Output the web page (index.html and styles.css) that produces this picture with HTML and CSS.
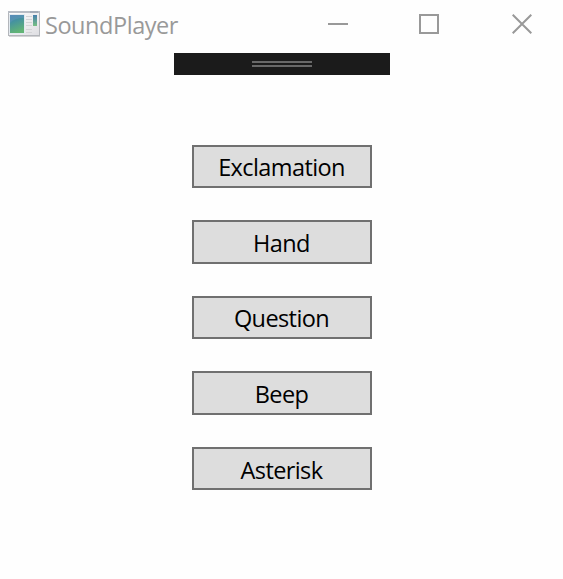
FILE: index.html
```html
<!DOCTYPE html>
<html lang="en">
<head>
<meta charset="utf-8">
<title>SoundPlayer</title>
<link rel="stylesheet" href="styles.css">
</head>
<body>
<div class="window">
  <header class="titlebar">
    <svg class="app-icon" width="32" height="26" viewBox="0 0 32 26">
      <defs>
        <linearGradient id="frame" x1="0" y1="0" x2="1" y2="1">
          <stop offset="0" stop-color="#fff"/>
          <stop offset="1" stop-color="#dedee2"/>
        </linearGradient>
        <linearGradient id="pane" x1="0" y1="0" x2=".3" y2="1">
          <stop offset="0" stop-color="#4c80b4"/>
          <stop offset=".4" stop-color="#4592a0"/>
          <stop offset="1" stop-color="#62b475"/>
        </linearGradient>
        <linearGradient id="side" x1="0" y1="0" x2="0" y2="1">
          <stop offset="0" stop-color="#477fae"/>
          <stop offset="1" stop-color="#76bf83"/>
        </linearGradient>
      </defs>
      <rect x=".5" y=".5" width="31" height="24" fill="url(#frame)" stroke="#b3b6bb"/>
      <path d="M0 1h32" stroke="#b8bdc5" stroke-width="2"/>
      <path d="M22 1h8" stroke="#929cac"/>
      <path d="M1 25.500h31" stroke="#d2d2d4"/>
      <rect x="1.500" y="3.500" width="15" height="19" fill="url(#pane)" stroke="#e2e9ef"/>
      <path d="M2 12Q6 7 16 7V4H2z" fill="#6c9bc5" opacity=".35"/>
      <path d="M18 5.500h6M18 8.500h6M18 11.500h6M18 14.500h6M18 18.500h6M18 21.500h6" stroke="#d3d4d6"/>
      <rect x="25" y="4" width="4" height="11" fill="url(#side)"/>
    </svg>
    <h1 class="title">SoundPlayer</h1>
    <div class="controls">
      <svg width="20" height="20" viewBox="0 0 20 20"><path d="M0 10h20"/></svg>
      <svg width="20" height="20" viewBox="0 0 20 20"><path d="M1 1h18v18H1z"/></svg>
      <svg width="20" height="20" viewBox="0 0 20 20"><path d="M.7.7l18.600 18.600M19.300.7L.7 19.300"/></svg>
    </div>
  </header>
  <div class="toolbar"><span class="grip"></span></div>
  <main class="buttons">
    <button>Exclamation</button>
    <button class="tall">Hand</button>
    <button>Question</button>
    <button class="tall">Beep</button>
    <button class="low">Asterisk</button>
  </main>
</div>
</body>
</html>
```
FILE: styles.css
```css
body {
  margin: 0;
  background: #fefefe;
  font-family: "Open Sans", "Noto Sans", sans-serif;
}
.window {
  display: flex;
  flex-direction: column;
  align-items: center;
  height: 579px;
  overflow: hidden;
}
.titlebar {
  display: flex;
  align-items: flex-start;
  box-sizing: border-box;
  width: 100%;
  height: 53px;
  padding: 11px 31px 0 8px;
}
.title {
  margin: -2px 0 0 5px;
  font-size: 23.5px;
  line-height: 32px;
  font-weight: 370;
  letter-spacing: -0.45px;
  color: #999;
}
.controls {
  display: flex;
  width: 204px;
  margin: 3px 0 0 auto;
}
.controls svg {
  fill: none;
  stroke: #999;
  stroke-width: 2;
  margin-right: 71px;
}
.controls svg + svg {
  margin-right: 73px;
}
.controls svg:last-child {
  margin-right: 0;
}
.toolbar {
  display: flex;
  justify-content: center;
  width: 216px;
  height: 22px;
  background: #1b1b1b;
}
.grip {
  box-sizing: border-box;
  width: 60px;
  height: 6px;
  margin-top: 8px;
  border: solid #686868;
  border-width: 2px 0;
}
.buttons {
  display: flex;
  flex-direction: column;
  gap: 32px;
  margin-top: 70px;
}
.buttons button {
  box-sizing: border-box;
  width: 180px;
  height: 43px;
  padding: 1px 0 0;
  border: 2px solid #707070;
  border-radius: 0;
  background: #ddd;
  color: #000;
  font: 370 23.5px/32px "Open Sans", "Noto Sans", sans-serif;
  letter-spacing: -0.6px;
}
.buttons .tall {
  height: 44px;
}
.buttons .low {
  padding-top: 3px;
}
```
